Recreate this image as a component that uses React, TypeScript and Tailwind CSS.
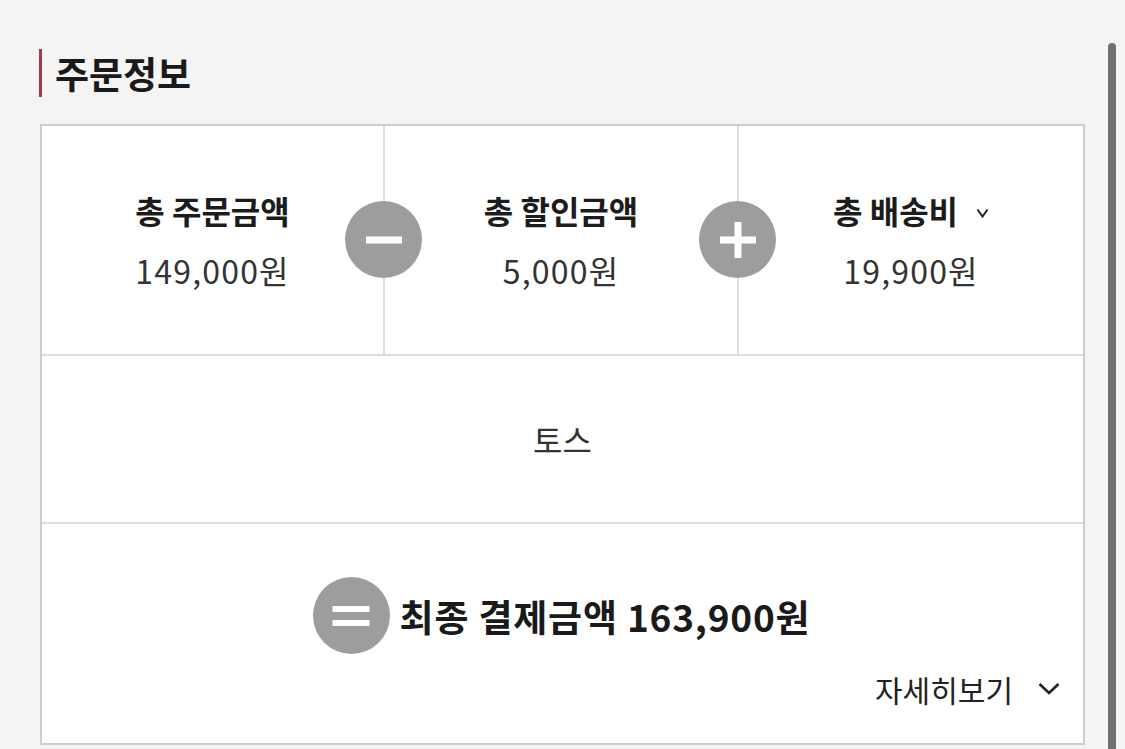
import React from "react";

const font = { fontFamily: '"Noto Sans CJK KR", "Noto Sans", sans-serif' };

function Circle({ kind }: { kind: "minus" | "plus" | "equals" }) {
  return (
    <div className="w-[77px] h-[77px] rounded-full bg-[#9d9d9d] flex items-center justify-center shrink-0">
      <svg width="40" height="40" viewBox="0 0 40 40">
        {kind === "minus" && <rect x="2" y="16.5" width="36" height="7" fill="#fff" />}
        {kind === "plus" && (
          <>
            <rect x="2" y="16.5" width="36" height="7" fill="#fff" />
            <rect x="16.5" y="2" width="7" height="36" fill="#fff" />
          </>
        )}
        {kind === "equals" && (
          <>
            <rect x="1.5" y="10" width="37" height="6" fill="#fff" />
            <rect x="1.5" y="24" width="37" height="6" fill="#fff" />
          </>
        )}
      </svg>
    </div>
  );
}

function Cell({ title, value, chevron }: { title: string; value: string; chevron?: boolean }) {
  return (
    <div className="flex flex-col items-center justify-center gap-[22px]">
      <div className="flex items-center h-[38px] text-[32px] font-bold text-[#1c1c1c] leading-[38px]">
        <span>{title}</span>
        {chevron && (
          <svg className="ml-[18px] mt-[6px]" width="13" height="10" viewBox="0 0 13 10">
            <path d="M1.5 1.5 L6.5 8.5 L11.5 1.5" fill="none" stroke="#222" strokeWidth="2" />
          </svg>
        )}
      </div>
      <div className="h-[38px] text-[32px] tracking-[1.2px] text-[#333] leading-[38px]">{value}</div>
    </div>
  );
}

export default function App() {
  return (
    <div className="w-[1125px] h-[749px] bg-[#f4f4f4] relative overflow-hidden" style={font}>
      <div className="pt-[49px] pl-[39px] flex items-center">
        <div className="w-[3px] h-[48px] bg-[#a9364e]" />
        <div className="ml-[13px] text-[37px] font-bold text-[#1a1a1a] leading-[48px]">주문정보</div>
      </div>
      <div className="mx-[40px] mt-[27px] border-2 border-[#cdcdcd] bg-white flex flex-col">
        <div className="relative h-[228px] grid grid-cols-[341px_2px_352px_2px_1fr]">
          <Cell title="총 주문금액" value="149,000원" />
          <div className="bg-[#dedede]" />
          <Cell title="총 할인금액" value="5,000원" />
          <div className="bg-[#dedede]" />
          <Cell title="총 배송비" value="19,900원" chevron />
          <div className="absolute left-[303px] top-[75px]">
            <Circle kind="minus" />
          </div>
          <div className="absolute left-[657px] top-[75px]">
            <Circle kind="plus" />
          </div>
        </div>
        <div className="h-[2px] bg-[#dedede]" />
        <div className="h-[166px] flex items-center justify-center text-[32px] text-[#333]">토스</div>
        <div className="h-[2px] bg-[#dedede]" />
        <div className="h-[219px] flex flex-col pt-[53px]">
          <div className="flex items-center justify-center gap-[10px] pr-[2px]">
            <Circle kind="equals" />
            <div className="text-[37px] font-bold tracking-[0.8px] text-[#1a1a1a] leading-[44px]">최종 결제금액 163,900원</div>
          </div>
          <div className="mt-[17px] flex items-center justify-end pr-[23px] h-[36px]">
            <span className="text-[30px] text-[#222] leading-[36px]">자세히보기</span>
            <svg className="ml-[25px]" width="22" height="14" viewBox="0 0 22 14">
              <path d="M1.5 2 L11 11 L20.5 2" fill="none" stroke="#222" strokeWidth="2.6" />
            </svg>
          </div>
        </div>
      </div>
      <div className="absolute left-[1108px] top-[43px] w-[8px] h-[740px] rounded-full bg-[#707070]" />
    </div>
  );
}
